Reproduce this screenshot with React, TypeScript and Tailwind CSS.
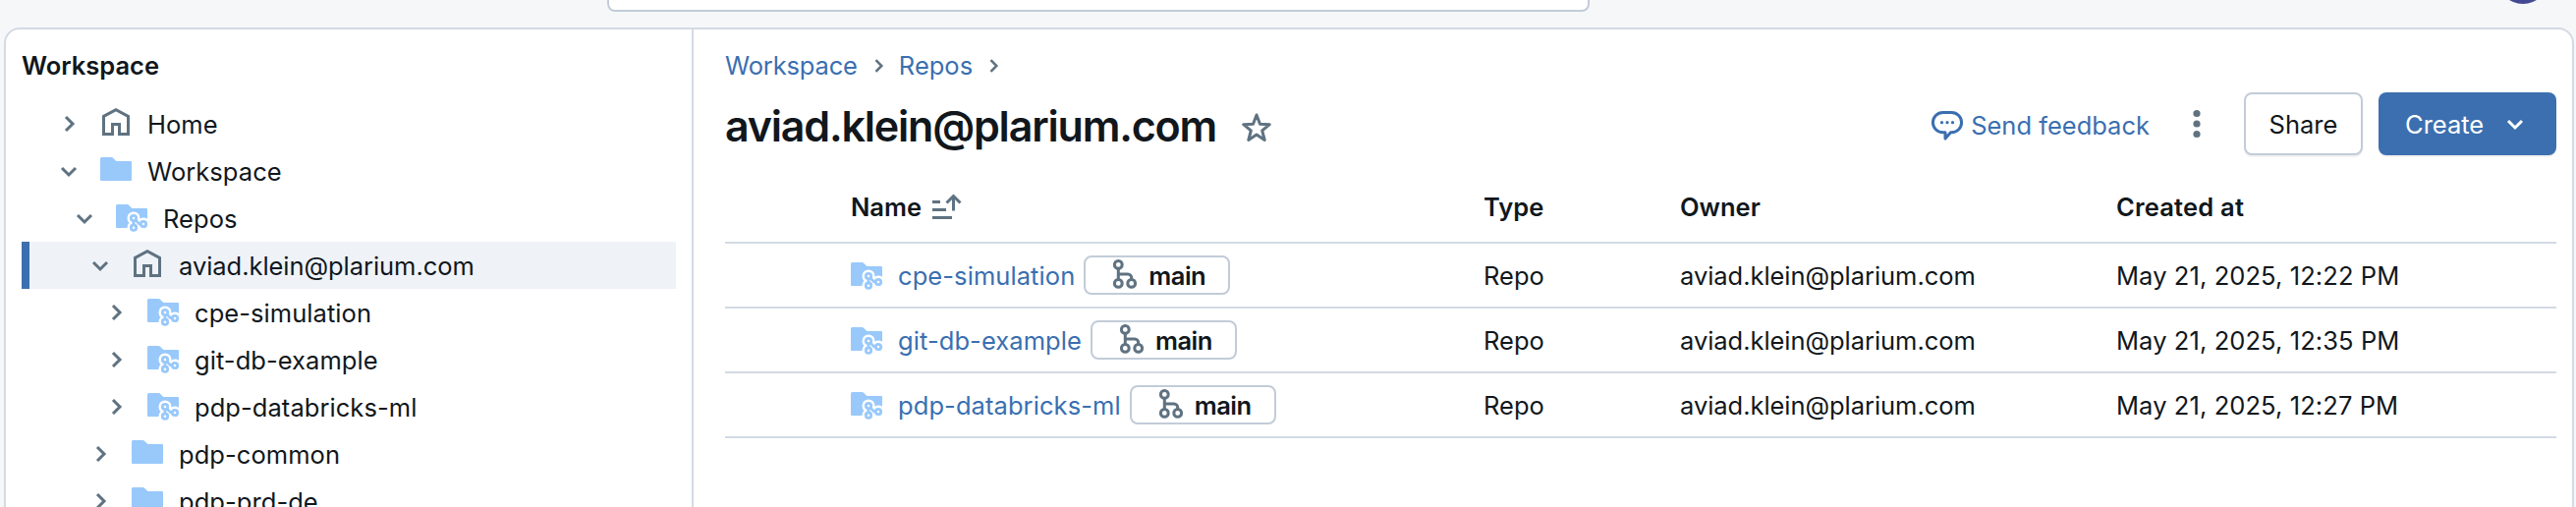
import type { ReactNode } from "react";

const FOLDER = "M0 1.5A1.5 1.5 0 0 1 1.5 0H11.2a3 3 0 0 1 2.1.9L16.4 4H31a1 1 0 0 1 1 1V23a1 1 0 0 1-1 1H1a1 1 0 0 1-1-1Z";

function HomeIcon() {
  return (
    <svg className="h-8 w-8 shrink-0" viewBox="0 0 32 32" fill="none" stroke="#5f7281" strokeWidth="3">
      <path d="M3.5 8.400 16 1.700 28.500 8.400V26.500H19.500V16.500H12.500V26.500H3.500Z" />
    </svg>
  );
}

function FolderIcon() {
  return (
    <svg className="h-8 w-8 shrink-0" viewBox="0 0 32 32" fill="#99c9fb">
      <path transform="translate(0 2)" d={FOLDER} />
    </svg>
  );
}

function RepoIcon() {
  return (
    <svg className="h-8 w-8 shrink-0" viewBox="0 0 32 32" fill="none">
      <path transform="translate(0 2)" fill="#99c9fb" d={FOLDER} />
      <g stroke="white" fill="white" strokeWidth="7.500" strokeLinejoin="round">
        <circle cx="18" cy="16" r="2.800" />
        <circle cx="18" cy="25.700" r="2.800" />
        <circle cx="28" cy="22" r="2.800" />
        <path d="M18 16V26M18 16 24 22H28" />
      </g>
      <g stroke="#99c9fb" strokeWidth="2.800">
        <path d="M18 18.500V23.500M19.800 18 23.500 21.500H25.500" />
        <circle cx="18" cy="16" r="2.700" fill="white" />
        <circle cx="18" cy="25.700" r="2.700" fill="white" />
        <circle cx="28" cy="22" r="2.700" fill="white" />
      </g>
    </svg>
  );
}

function BranchIcon() {
  return (
    <svg className="h-8 w-8 shrink-0" viewBox="0 0 32 32" fill="none" stroke="#5f7281" strokeWidth="3">
      <circle cx="9.300" cy="5.400" r="3.900" />
      <circle cx="9.300" cy="24.400" r="3.900" />
      <circle cx="22.700" cy="24.400" r="3.900" />
      <path d="M9.300 9.300V20.500M9.300 15H19a3.700 3.700 0 0 1 3.700 3.700V20.500" />
    </svg>
  );
}

function Chevron({ open, className }: { open?: boolean; className?: string }) {
  return (
    <svg className={className ?? "h-6 w-6 shrink-0"} viewBox="0 0 24 24" fill="none" stroke="currentColor" strokeWidth="3">
      {open ? <path d="m5 9 7 7 7-7" /> : <path d="m9 5 7 7-7 7" />}
    </svg>
  );
}

type Kind = "home" | "folder" | "repo";

const tree: { label: string; kind: Kind; pad: string; open?: boolean; selected?: boolean }[] = [
  { label: "Home", kind: "home", pad: "pl-9" },
  { label: "Workspace", kind: "folder", pad: "pl-9", open: true },
  { label: "Repos", kind: "repo", pad: "pl-[52px]", open: true },
  { label: "aviad.klein@plarium.com", kind: "home", pad: "pl-[60px]", open: true, selected: true },
  { label: "cpe-simulation", kind: "repo", pad: "pl-[84px]" },
  { label: "git-db-example", kind: "repo", pad: "pl-[84px]" },
  { label: "pdp-databricks-ml", kind: "repo", pad: "pl-[84px]" },
  { label: "pdp-common", kind: "folder", pad: "pl-[68px]" },
  { label: "pdp-prd-de", kind: "folder", pad: "pl-[68px]" },
];

const repos = [
  { name: "cpe-simulation", created: "May 21, 2025, 12:22 PM" },
  { name: "git-db-example", created: "May 21, 2025, 12:35 PM" },
  { name: "pdp-databricks-ml", created: "May 21, 2025, 12:27 PM" },
];

const icons: Record<Kind, ReactNode> = {
  home: <HomeIcon />,
  folder: <FolderIcon />,
  repo: <RepoIcon />,
};

function Sidebar() {
  return (
    <aside className="w-[700px] shrink-0 border-r-2 border-[#d3dae4] pl-4 pr-4">
      <h2 className="mt-[17px] mb-[15px] h-10 text-[25.5px] leading-10 font-semibold">Workspace</h2>
      <ul>
        {tree.map((n) => (
          <li
            key={n.label}
            className={`flex h-12 items-center ${n.pad} ${n.selected ? "border-l-8 border-[#3c6fb0] bg-[#eff3f8] tracking-[-0.05px]" : "tracking-[0.06px]"}`}
          >
            <span className="mr-5 flex text-[#5f7281]">
              <Chevron open={n.open} />
            </span>
            {icons[n.kind]}
            <span className="ml-4 pt-0.5 whitespace-nowrap">{n.label}</span>
          </li>
        ))}
      </ul>
    </aside>
  );
}

function Toolbar() {
  return (
    <div className="flex items-center">
      <a className="flex items-center text-[#3a6fb0]">
        <svg className="mr-2 h-8 w-8 overflow-visible" viewBox="0 0 32 32" fill="none" stroke="currentColor" strokeWidth="3">
          <path strokeLinejoin="round" d="M11.500 4.500H20.500a10 10 0 0 1 0 20.200H19.500L14 31V24.700H11.500a10 10 0 0 1 0-20.200Z" />
          <g fill="currentColor" stroke="none">
            <circle cx="10.500" cy="14.700" r="1.600" />
            <circle cx="16" cy="14.700" r="1.600" />
            <circle cx="21.500" cy="14.700" r="1.600" />
          </g>
        </svg>
        <span className="pt-[3px]">Send feedback</span>
      </a>
      <svg className="ml-8 h-8 w-8" viewBox="0 0 32 32" fill="#5f7281">
        <circle cx="16" cy="5.500" r="3.600" />
        <circle cx="16" cy="16" r="3.600" />
        <circle cx="16" cy="26.500" r="3.600" />
      </svg>
      <button className="ml-8 h-16 w-[121px] rounded-lg border-2 border-[#c2ccd8] bg-white pt-0.5 shadow-[0_2px_0_rgba(0,0,0,0.05)]">Share</button>
      <button className="ml-4 flex h-16 w-[181px] items-center justify-between rounded-lg bg-[#3c6fb0] pr-[30px] pl-[27px] text-white shadow-[0_2px_0_rgba(0,0,0,0.05)]">
        <span className="pt-0.5">Create</span>
        <Chevron open />
      </button>
    </div>
  );
}

function RepoTable() {
  const grid = "grid grid-cols-[128px_644px_200px_444px_1fr] items-center border-b-2 border-[#d3dae4]";
  return (
    <div>
      <div className={`${grid} h-[74px] pt-0.5 font-semibold`}>
        <span />
        <span className="flex items-center">
          Name
          <svg className="ml-2.5 h-8 w-8" viewBox="0 0 32 32" fill="none" stroke="#5f7281" strokeWidth="3">
            <path d="M1 10.500h8M1 18.500h14M1 26.500h20M22.500 4V19.500M15.500 11.500l7-7 7 7" />
          </svg>
        </span>
        <span>Type</span>
        <span>Owner</span>
        <span className="tracking-[0.2px]">Created at</span>
      </div>
      {repos.map((r) => (
        <div key={r.name} className={`${grid} h-[66px]`}>
          <span />
          <span className="flex items-center">
            <span className="flex pt-0.5">
              <RepoIcon />
            </span>
            <a className="ml-4 pt-0.5 tracking-[0.08px] text-[#3a6fb0]">{r.name}</a>
            <span className="ml-[9px] flex h-10 w-[149px] items-center rounded-lg border-2 border-[#c2ccd8] pl-6">
              <BranchIcon />
              <b className="ml-2 pt-px font-semibold tracking-[-0.5px]">main</b>
            </span>
          </span>
          <span className="pt-0.5">Repo</span>
          <span className="pt-0.5 tracking-[-0.05px]">aviad.klein@plarium.com</span>
          <span className="pt-0.5 tracking-[0.09px]">{r.created}</span>
        </div>
      ))}
    </div>
  );
}

export default function App() {
  return (
    <div className="flex h-[516px] w-[2622px] flex-col overflow-hidden bg-[#f6f7f9] font-['Inter',sans-serif] text-[25.5px] leading-10 text-[#11171c]">
      <header className="flex h-7 shrink-0 items-start">
        <div className="ml-[618px] h-3 w-[1000px] shrink-0 rounded-b-lg border-2 border-t-0 border-[#c2ccd8] bg-white" />
        <div className="mt-[-48px] ml-[924px] h-[52px] w-[52px] shrink-0 rounded-full bg-[#434a93]" />
      </header>
      <div className="mr-[2px] ml-1 flex h-[600px] shrink-0 rounded-2xl border-2 border-[#d3dae4] bg-white">
        <Sidebar />
        <main className="min-w-0 flex-1 pr-4 pl-8">
          <nav className="mt-[17px] flex h-10 items-center text-[#3a6fb0]">
            <a className="tracking-[-0.15px]">Workspace</a>
            <Chevron className="mr-[11px] ml-[11px] h-5 w-5 text-[#5f7281]" />
            <a>Repos</a>
            <Chevron className="mx-[11px] h-5 w-5 text-[#5f7281]" />
          </nav>
          <div className="mt-[7px] flex h-16 items-center justify-between">
            <h1 className="flex items-center pt-[3px] text-[43px] font-semibold tracking-[-1.2px]">
              aviad.klein@plarium.com
              <svg className="mt-1 ml-[25px] h-8 w-8" viewBox="0 0 32 32" fill="none" stroke="#5f7281" strokeWidth="3" strokeLinejoin="round">
                <path d="M16 3 19.500 12.200 29.300 12.700 21.700 18.900 24.200 28.500 16 23 7.800 28.500 10.300 18.900 2.700 12.700 12.500 12.200Z" />
              </svg>
            </h1>
            <Toolbar />
          </div>
          <div className="mt-4">
            <RepoTable />
          </div>
        </main>
      </div>
    </div>
  );
}
